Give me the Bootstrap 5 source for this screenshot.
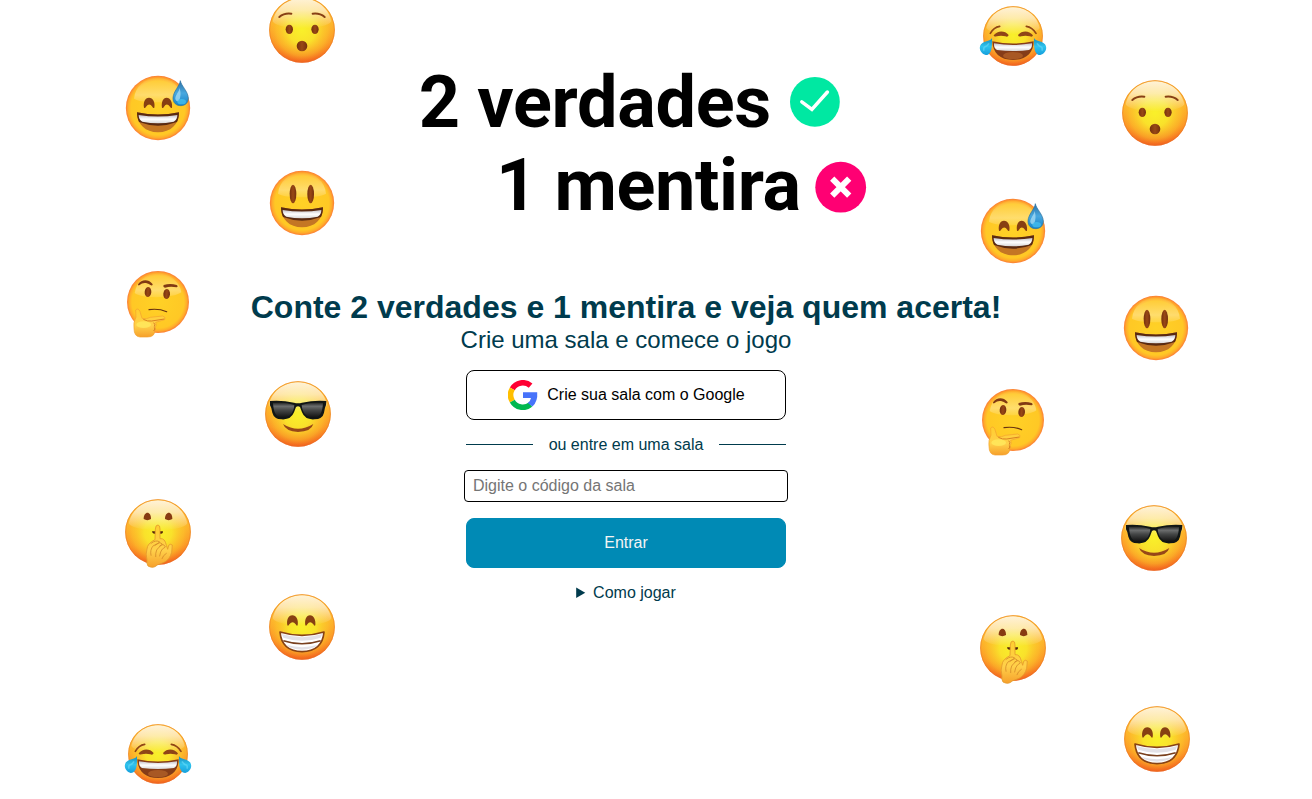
<!DOCTYPE html>
<html lang="pt-BR">
<head>
<meta charset="utf-8">
<meta name="viewport" content="width=device-width, initial-scale=1">
<title>2 verdades 1 mentira</title>
<link href="https://cdn.jsdelivr.net/npm/bootstrap@5.3.0/dist/css/bootstrap.min.css" rel="stylesheet">
<style>
body{font-family:"Liberation Sans",Arial,sans-serif;color:#003b4d;height:799px;line-height:1.15;background:#fff}
.scene{height:799px}
.face{position:absolute;width:84px;height:84px;overflow:visible}
.game{width:1252px;padding-top:58px}
.logo{display:block;width:480px;height:170px;margin-left:33px}
.logo text{font-family:Roboto,sans-serif;font-weight:700;font-size:72px;fill:#000}
.headline{font-size:32px;font-weight:700;line-height:37px;margin-top:61px}
.tagline{font-size:24px;line-height:28px}
.panel{width:320px;margin-top:16px}
.btn{--bs-btn-border-radius:8px;height:50px;line-height:18px}
.btn-google{--bs-btn-color:#000;--bs-btn-border-color:#000;--bs-btn-bg:#fff;padding:0 0 0 1px;gap:9px}
.btn-enter{--bs-btn-color:#f4f4f4;--bs-btn-bg:#008ab5;--bs-btn-border-color:#008ab5;margin-top:16px}
.divider{height:18px;margin:16px 0}
.divider::before,.divider::after{content:"";flex:1;height:1px;margin-bottom:1px;background:#003b4d}
.room{width:324px;max-width:none;height:32px;margin:0 -2px;padding:0 8px;border-color:#000;border-radius:4px}
.room::placeholder{color:#757575}
.help{margin-top:16px;line-height:18px}
</style>
</head>
<body>
<svg width="0" height="0" class="position-absolute" aria-hidden="true">
<defs>
<linearGradient id="hot" x1="0" y1="0" x2="0" y2="1"><stop offset="0" stop-color="#ffc93a"/><stop offset=".4" stop-color="#fdb62c"/><stop offset=".7" stop-color="#fb8f25"/><stop offset="1" stop-color="#f0521c"/></linearGradient>
<radialGradient id="glow" cx=".5" cy=".5" r=".53"><stop offset="0" stop-color="#f9f02a"/><stop offset=".4" stop-color="#f9e52b" stop-opacity=".95"/><stop offset=".75" stop-color="#fcc82a" stop-opacity=".55"/><stop offset="1" stop-color="#fda428" stop-opacity="0"/></radialGradient>
<radialGradient id="flat" cx=".5" cy=".5" r=".5"><stop offset="0" stop-color="#ffd126"/><stop offset=".84" stop-color="#ffc825"/><stop offset=".93" stop-color="#ffab2b"/><stop offset="1" stop-color="#fb7d35"/></radialGradient>
<linearGradient id="shine" x1="0" y1="0" x2="0" y2="1"><stop offset="0" stop-color="#fff" stop-opacity=".8"/><stop offset=".4" stop-color="#fff" stop-opacity=".6"/><stop offset="1" stop-color="#fff" stop-opacity="0"/></linearGradient>
<linearGradient id="sheen" x1="0" y1="0" x2="0" y2="1"><stop offset="0" stop-color="#fff" stop-opacity=".05"/><stop offset=".7" stop-color="#fff" stop-opacity=".33"/><stop offset="1" stop-color="#fff" stop-opacity=".12"/></linearGradient>
<linearGradient id="drop" x1="0" y1="0" x2="0" y2="1"><stop offset="0" stop-color="#2c6fa4"/><stop offset=".5" stop-color="#48a8df"/><stop offset="1" stop-color="#1683c8"/></linearGradient>
<linearGradient id="tear" x1="0" y1="0" x2="0" y2="1"><stop offset="0" stop-color="#1689b9"/><stop offset=".5" stop-color="#2fc3ee"/><stop offset="1" stop-color="#159fdc"/></linearGradient>
<linearGradient id="lens" x1="0" y1="0" x2="0" y2="1"><stop offset="0" stop-color="#202020"/><stop offset=".25" stop-color="#6c6e6e"/><stop offset=".5" stop-color="#454747"/><stop offset="1" stop-color="#111"/></linearGradient>
<linearGradient id="teeth" x1="0" y1="0" x2="0" y2="1"><stop offset="0" stop-color="#c5c2c9"/><stop offset=".5" stop-color="#fff"/><stop offset="1" stop-color="#d8d7d8"/></linearGradient>
<linearGradient id="hand" x1="0" y1="0" x2="0" y2="1"><stop offset="0" stop-color="#ffce2f"/><stop offset=".6" stop-color="#ffd04a"/><stop offset="1" stop-color="#f6a02b"/></linearGradient>
<linearGradient id="eye" x1="0" y1="0" x2="1" y2="0"><stop offset="0" stop-color="#75300d"/><stop offset=".5" stop-color="#984816"/><stop offset="1" stop-color="#75300d"/></linearGradient>

<g id="ballHot"><circle cx="126" cy="126" r="98.5" fill="url(#hot)"/><circle cx="126" cy="126" r="97" fill="url(#glow)"/><path d="M38 100C46 60 82 31 126 31S206 60 214 100C200 128 52 128 38 100Z" fill="url(#shine)"/><circle cx="126" cy="126" r="97.2" fill="none" stroke="#e97828" stroke-width="2.5" opacity=".7"/></g>
<g id="ballFlat"><circle cx="126" cy="126" r="96.5" fill="url(#flat)"/><path d="M54 98C58 60 87 37 126 37S194 60 198 98C180 112 72 112 54 98Z" fill="url(#sheen)"/></g>
<g id="openMouth"><path d="M63 138Q126 151 189 138C189 175 164 198 126 198S64 175 63 138Z" fill="#c47624"/><path d="M63 138Q126 151 189 138C189 151 187 160 183 167Q126 189 69 167C65 159 63 150 63 138Z" fill="#5a2a11"/><path d="M68 146Q126 155 184 146Q184 160 173 166Q126 176 79 166Q68 160 68 146Z" fill="url(#teeth)"/></g>
<g id="arcEyes" fill="#874012"><path d="M84 124C81 108 87 94 99 94S118 108 115 124Q112 127 109 121Q100 108 90 121Q87 127 84 124Z"/><path d="M138 124C135 108 141 94 152 94S170 108 168 124Q165 127 162 121Q152 108 144 121Q141 127 138 124Z"/></g>

<symbol id="wow" viewBox="0 0 252 252" overflow="visible"><use href="#ballHot" y="-36"/><g fill="none" stroke="#884015" stroke-width="6" stroke-linecap="round"><path d="M58 51Q73 38 94 41M158 41Q179 38 194 51"/></g><g fill="url(#eye)"><ellipse cx="88" cy="88" rx="11" ry="14"/><ellipse cx="165" cy="88" rx="11" ry="14"/><ellipse cx="126" cy="138" rx="16" ry="16"/></g></symbol>

<symbol id="sweat" viewBox="0 0 252 252" overflow="visible"><use href="#ballFlat"/><use href="#openMouth" y="1"/><use href="#arcEyes" y="1"/><path d="M193 44C196 60 216 76 217 96C217 111 207 119 194 119S171 111 171 96C172 76 191 60 193 44Z" fill="url(#drop)" stroke="#286f9f" stroke-width="2"/><path d="M191 66C188 80 177 88 178 100Q182 109 189 104Q197 88 191 66Z" fill="#a9def4" opacity=".75"/><ellipse cx="197" cy="107" rx="13" ry="8" fill="#45c0f0" opacity=".75"/></symbol>

<symbol id="smiley" viewBox="0 0 252 252" overflow="visible"><use href="#ballFlat" y="-3"/><use href="#openMouth" y="-2"/><g fill="url(#eye)"><ellipse cx="99" cy="96" rx="10" ry="28"/><ellipse cx="152" cy="96" rx="10" ry="28"/></g></symbol>

<symbol id="think" viewBox="0 0 252 252" overflow="visible"><circle cx="126" cy="120" r="93" fill="url(#flat)"/><path d="M56 93C62 56 91 35 126 35S190 56 196 91C175 109 76 111 56 93Z" fill="url(#sheen)"/><path d="M66 67C77 51 97 51 109 65C112 69 108 72 103 69C90 60 79 62 71 69Q66 72 66 67Z" fill="#813a13"/><path d="M143 69Q163 63 182 69Q188 73 182 76Q163 72 147 77Q140 76 143 69Z" fill="#813a13"/><g fill="url(#eye)"><ellipse cx="96" cy="90" rx="10" ry="15" transform="rotate(5 96 90)"/><ellipse cx="152" cy="96" rx="10" ry="15" transform="rotate(5 152 96)"/></g><path d="M99 143Q128 139 152 149" fill="none" stroke="#68330f" stroke-width="3.5" stroke-linecap="round"/><path d="M59 144Q67 136 72 149L78 169Q91 173 103 166L140 162Q151 166 146 173L119 181Q123 190 118 196Q121 201 116 207Q116 225 94 225H72Q54 224 54 199Q51 182 60 165Z" fill="url(#hand)" stroke="#f3a02d" stroke-width="2"/><path d="M82 172Q94 179 107 177L145 171M113 182Q119 187 115 194M115 196Q119 201 113 207" fill="none" stroke="#d0701c" stroke-width="2.5"/><ellipse cx="83" cy="188" rx="22" ry="10" fill="#ffef63" opacity=".65"/></symbol>

<symbol id="cool" viewBox="0 0 252 252" overflow="visible"><use href="#ballHot"/><path d="M42 87Q78 84 114 92Q126 96 138 92Q175 84 211 87L210 99Q206 107 204 122Q200 141 175 142Q147 144 138 121L132 105Q126 101 120 105L114 121Q105 144 77 142Q54 141 49 122Q47 107 42 100Z" fill="#111615"/><path d="M51 93Q87 88 115 99Q112 136 79 137Q53 138 51 93ZM201 93Q165 88 137 99Q140 136 173 137Q199 138 201 93Z" fill="url(#lens)"/><path d="M81 156Q126 185 172 156Q166 179 126 180Q89 178 81 156Z" fill="#974718"/></symbol>

<symbol id="hush" viewBox="0 0 252 252" overflow="visible"><use href="#ballHot" y="-6"/><path d="M83 81C83 56 106 56 105 81Q94 88 83 81ZM147 81C147 56 170 56 169 81Q158 88 147 81Z" fill="#873b12"/><path d="M108 118L141 118Q142 125 136 125H114Q108 124 108 118Z" fill="#52250b"/><path d="M118 111Q119 98 126 99Q132 99 132 111V140Q147 138 151 160L155 172L158 160Q162 154 169 159L167 181Q161 203 144 211L124 219Q112 231 96 222Q91 214 93 204Q88 185 93 171Q94 154 117 143Z" fill="url(#hand)" stroke="#e59a2c" stroke-width="2.5"/><path d="M105 154Q121 142 131 150Q127 156 112 161Q101 173 105 190M117 160Q132 146 139 157Q127 166 122 174Q118 184 119 194M131 162Q143 152 148 165Q137 170 134 180L131 192M151 184Q141 190 138 200" fill="none" stroke="#d08426" stroke-width="2.2" stroke-linecap="round"/></symbol>

<symbol id="grin" viewBox="0 0 252 252" overflow="visible"><use href="#ballHot" y="-3"/><g transform="translate(-2 -6)"><use href="#arcEyes"/></g><path d="M60 138Q126 158 192 138Q187 196 126 197Q65 196 60 138Z" fill="#fff" stroke="#884214" stroke-width="5" stroke-linejoin="round"/><path d="M65 144Q126 163 187 144L182 155Q126 174 70 155ZM80 177Q126 190 172 177L164 184Q126 198 88 184Z" fill="#d7d4dc" opacity=".7"/><path d="M70 164Q126 182 182 164" fill="none" stroke="#79401e" stroke-width="4.5"/></symbol>

<symbol id="joy" viewBox="0 0 252 252" overflow="visible"><g transform="translate(11.5 2.4) scale(.909)"><use href="#ballHot"/></g><path d="M58 109Q68 91 86 88M166 88Q184 91 195 109" fill="none" stroke="#914615" stroke-width="5" stroke-linecap="round"/><path d="M68 115C80 100 101 100 113 114Q111 121 103 118Q90 114 77 118Q68 120 68 115ZM141 114C153 100 174 100 186 115Q184 121 177 118Q163 114 151 118Q142 120 141 114Z" fill="#8f4517"/><path d="M64 133Q126 146 188 133C188 168 165 189 126 189S65 168 64 133Z" fill="#853c18"/><path d="M69 139Q126 149 183 139Q184 154 174 159Q126 165 78 159Q68 154 69 139Z" fill="url(#teeth)"/><ellipse cx="126" cy="176" rx="30" ry="11" fill="#a85824"/><g fill="url(#tear)"><path d="M63 123C58 134 42 129 30 142C21 153 30 172 44 174C60 174 64 155 63 123ZM189 123C194 134 210 129 222 142C231 153 222 172 208 174C192 174 188 155 189 123Z"/></g><path d="M54 139Q49 148 40 151Q36 157 40 161M198 139Q203 148 212 151Q216 157 212 161" fill="none" stroke="#6fdcf8" stroke-width="5" opacity=".55"/></symbol>
</defs>
</svg>

<div class="scene position-relative overflow-hidden">
<div aria-hidden="true">
<svg class="face" style="left:260px;top:0"><use href="#wow"/></svg>
<svg class="face" style="left:116px;top:66px"><use href="#sweat"/></svg>
<svg class="face" style="left:260px;top:162px"><use href="#smiley"/></svg>
<svg class="face" style="left:116px;top:262px"><use href="#think"/></svg>
<svg class="face" style="left:256px;top:372px"><use href="#cool"/></svg>
<svg class="face" style="left:116px;top:492px"><use href="#hush"/></svg>
<svg class="face" style="left:260px;top:586px"><use href="#grin"/></svg>
<svg class="face" style="left:116px;top:715px"><use href="#joy"/></svg>
<svg class="face" style="left:971px;top:-3px"><use href="#joy"/></svg>
<svg class="face" style="left:1113px;top:83px"><use href="#wow"/></svg>
<svg class="face" style="left:971px;top:189px"><use href="#sweat"/></svg>
<svg class="face" style="left:1114px;top:287px"><use href="#smiley"/></svg>
<svg class="face" style="left:971px;top:380px"><use href="#think"/></svg>
<svg class="face" style="left:1112px;top:496px"><use href="#cool"/></svg>
<svg class="face" style="left:971px;top:608px"><use href="#hush"/></svg>
<svg class="face" style="left:1115px;top:698px"><use href="#grin"/></svg>
</div>

<main class="game position-relative d-flex flex-column align-items-center">
<svg class="logo" viewBox="403 58 480 170" role="img" aria-label="2 verdades 1 mentira">
<text x="418.7" y="126.8" textLength="352.5">2 verdades</text>
<text x="496" y="210.3" textLength="305">1 mentira</text>
<circle cx="814.9" cy="101.8" r="24.9" fill="#00e8a2"/><path d="M801.8 101.8L811.9 109.3L827.4 92" fill="none" stroke="#fff" stroke-width="3.5" stroke-linecap="round"/>
<circle cx="840.7" cy="187.2" r="25.4" fill="#ff0073"/><path d="M832.2 178.7L849.2 195.7M849.2 178.7L832.2 195.7" fill="none" stroke="#fff" stroke-width="6"/>
</svg>
<h1 class="headline mb-0 text-center">Conte 2 verdades e 1 mentira e veja quem acerta!</h1>
<p class="tagline mb-0 text-center">Crie uma sala e comece o jogo</p>
<div class="panel d-flex flex-column">
<button type="button" class="btn btn-google d-flex align-items-center justify-content-center"><svg width="30" height="30" viewBox="0 0 30 30" fill="none" stroke-width="5.6" aria-hidden="true"><path d="M4.3 8.9A12 12 0 0 1 22.6 5.7" stroke="#ff0033"/><path d="M4.3 8.9A12 12 0 0 0 4.3 21.1" stroke="#ffbf00"/><path d="M4.3 21.1A12 12 0 0 0 22.4 24.6" stroke="#00b84f"/><path d="M15 12.3H29.2Q30 21.5 24.4 26.6L19.8 23Q22.4 21.2 23 18H15Z" fill="#4773fa" stroke="none"/></svg>Crie sua sala com o Google</button>
<div class="divider d-flex align-items-center gap-3">ou entre em uma sala</div>
<input type="text" class="form-control room" placeholder="Digite o código da sala" aria-label="Código da sala">
<button type="button" class="btn btn-enter">Entrar</button>
<details class="help text-center"><summary>Como jogar</summary><p class="mb-0 mt-2">Conte duas verdades e uma mentira.</p></details>
</div>
</main>
</div>
<script src="https://cdn.jsdelivr.net/npm/bootstrap@5.3.0/dist/js/bootstrap.bundle.min.js"></script>
</body>
</html>
